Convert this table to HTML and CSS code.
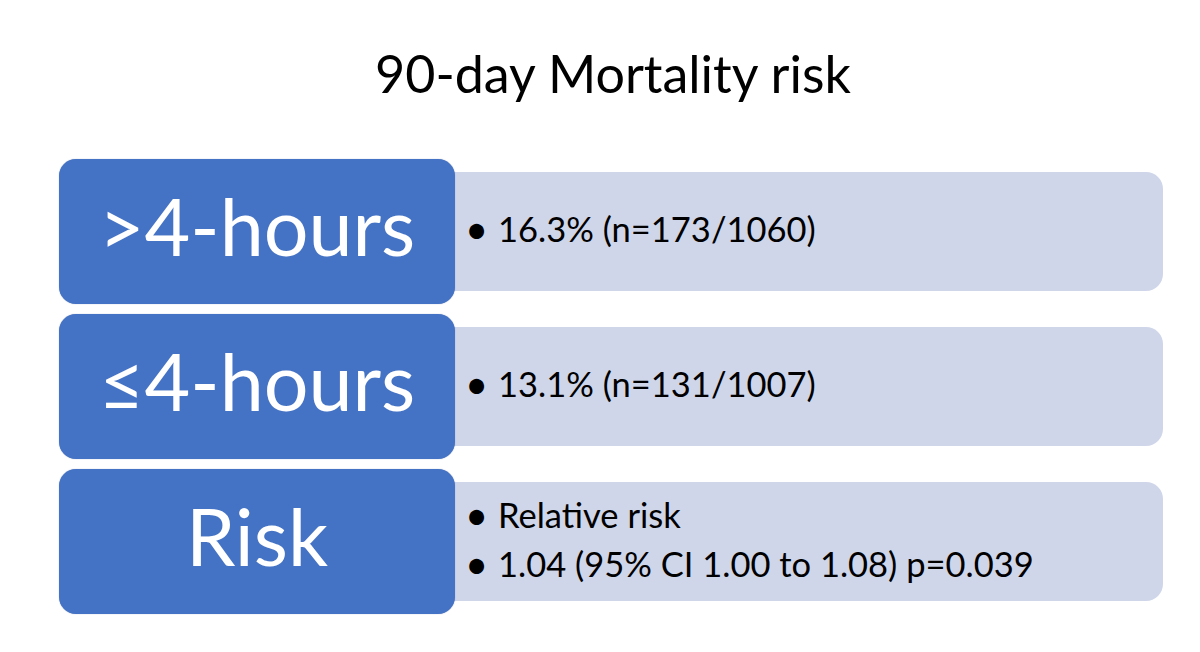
FILE: index.html
```html
<!DOCTYPE html>
<html>
<head>
<meta charset="utf-8">
<link rel="stylesheet" href="styles.css">
</head>
<body>
<div class="slide">
  <h1 class="title">90-day Mortality risk</h1>
  <div class="rows">
    <div class="row">
      <div class="label">&gt;4-hours</div>
      <div class="detail">
        <ul class="bullets">
          <li>16.3% (n=173/1060)</li>
        </ul>
      </div>
    </div>
    <div class="row">
      <div class="label">≤4-hours</div>
      <div class="detail">
        <ul class="bullets">
          <li>13.1% (n=131/1007)</li>
        </ul>
      </div>
    </div>
    <div class="row">
      <div class="label">Risk</div>
      <div class="detail">
        <ul class="bullets">
          <li>Relative risk</li>
          <li>1.04 (95% CI 1.00 to 1.08) p=0.039</li>
        </ul>
      </div>
    </div>
  </div>
</div>
</body>
</html>
```

FILE: styles.css
```css
html, body {
  margin: 0;
  padding: 0;
  background: #ffffff;
}

.slide {
  width: 1200px;
  height: 652px;
  font-family: "Lato", "Liberation Sans", sans-serif;
  overflow: hidden;
}

.title {
  margin: 0;
  height: 159px;
  box-sizing: border-box;
  padding-top: 38px;
  font-weight: 400;
  font-size: 52px;
  line-height: 70px;
  text-align: center;
  color: #000000;
  padding-left: 26px;
}

.rows {
  display: flex;
  flex-direction: column;
  gap: 10px;
  padding-left: 59px;
  width: 1104px;
}

.row {
  display: flex;
  height: 145px;
}

.label {
  position: relative;
  z-index: 1;
  flex: 0 0 396px;
  box-sizing: border-box;
  padding-bottom: 12px;
  background: #4472c4;
  border-radius: 17px;
  color: #ffffff;
  font-size: 79px;
  display: flex;
  align-items: center;
  justify-content: center;
  box-shadow: 0 0 1px rgba(40, 70, 130, 0.5);
}

.detail {
  flex: 1;
  margin: 13px 0 13px -24px;
  padding-left: 39px;
  padding-bottom: 5px;
  box-sizing: border-box;
  background: #cfd6ea;
  border-radius: 0 17px 17px 0;
  display: flex;
  align-items: center;
}

.bullets {
  list-style: none;
  margin: 0;
  padding: 0;
  font-size: 34.5px;
  line-height: 40px;
  color: #000000;
}

.bullets li {
  position: relative;
  padding-left: 28px;
}

.bullets li + li {
  margin-top: 9px;
}

.bullets li::before {
  content: "•";
  position: absolute;
  left: -5px;
  top: 0;
  font-size: 40px;
}
```
